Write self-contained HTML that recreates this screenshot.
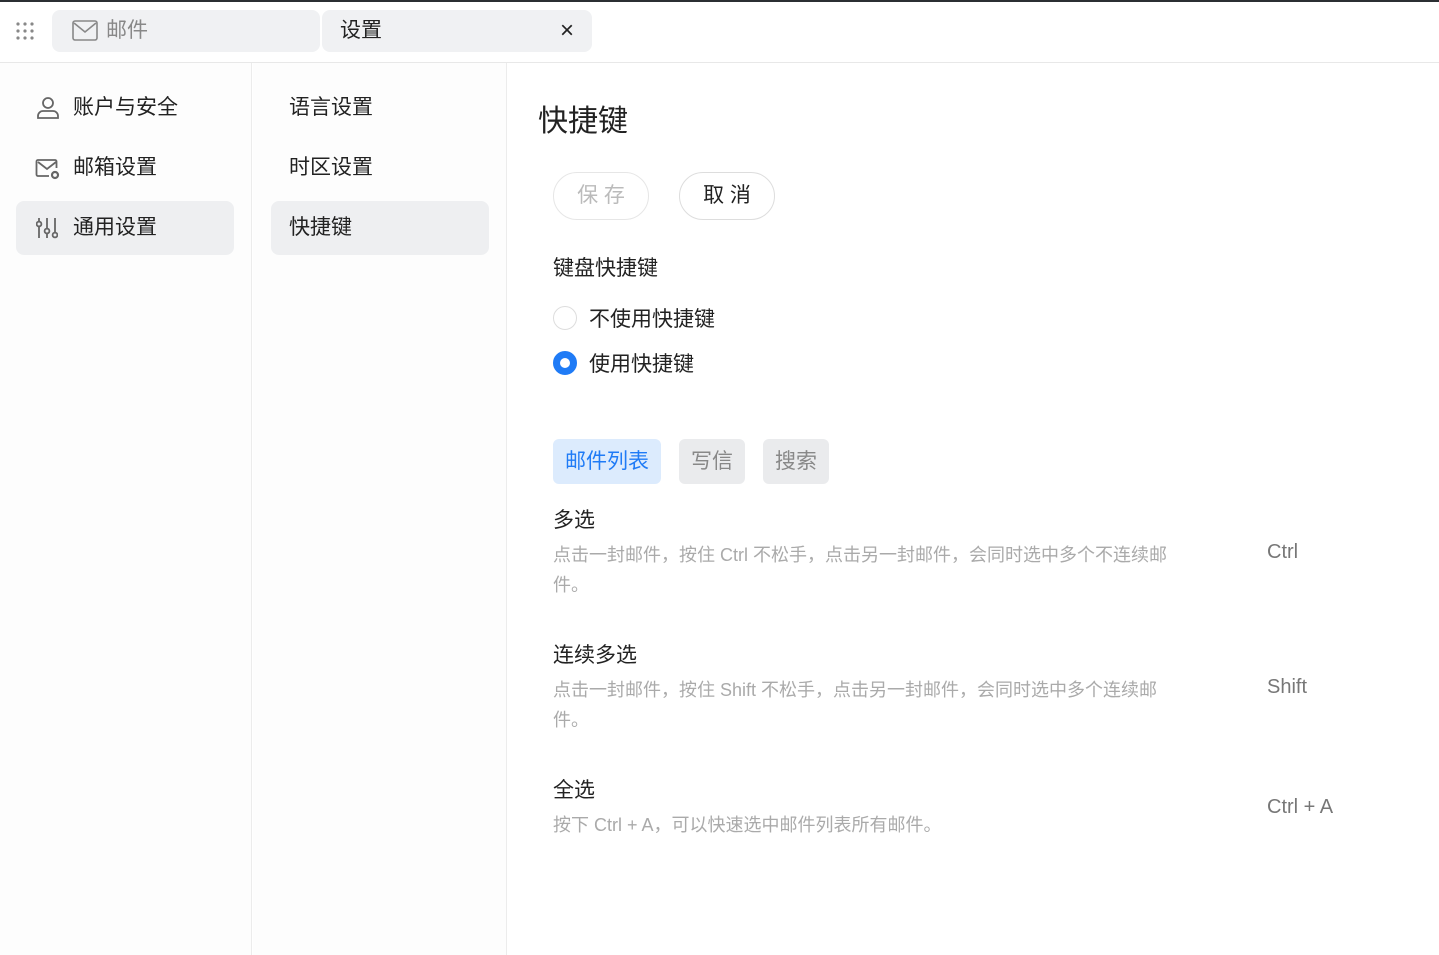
<!DOCTYPE html>
<html><head><meta charset="utf-8"><style>
*{margin:0;padding:0;box-sizing:border-box}
body{width:1439px;height:955px;background:#fff;font-family:"Liberation Sans","Noto Sans CJK SC",sans-serif;color:#222;position:relative;overflow:hidden}
.a{position:absolute}
.top{left:0;top:0;width:1439px;height:2px;background:#2b2f33}
.hdr{left:0;top:62px;width:1439px;height:1px;background:#e8e8e8}
.tab{top:10px;height:42px;background:#f0f1f3;border-radius:8px;font-size:21px;line-height:42px}
.col1{left:0;top:63px;width:252px;height:892px;background:#fdfdfd;border-right:1px solid #ececec}
.col2{left:253px;top:63px;width:254px;height:892px;background:#fdfdfd;border-right:1px solid #ececec}
.item{font-size:21px;line-height:54px;height:54px;border-radius:8px}
.sel{background:#eeeff1}
.btn{height:48px;border:1px solid #ddd;border-radius:24px;font-size:21px;line-height:46px;text-align:center}
.t{font-size:21px}
.g{font-size:18px;color:#aaa;line-height:30px}
.k{font-size:20px;color:#777}
.chip{top:439px;height:45px;border-radius:6px;font-size:21px;line-height:45px;text-align:center;background:#eaebed;color:#888}
</style></head><body>
<div class="a top"></div>
<svg class="a" style="left:15px;top:21px" width="22" height="20"><g fill="#888"><circle cx="3" cy="3" r="1.6"/><circle cx="10" cy="3" r="1.6"/><circle cx="17" cy="3" r="1.6"/><circle cx="3" cy="10" r="1.6"/><circle cx="10" cy="10" r="1.6"/><circle cx="17" cy="10" r="1.6"/><circle cx="3" cy="17" r="1.6"/><circle cx="10" cy="17" r="1.6"/><circle cx="17" cy="17" r="1.6"/></g></svg>
<div class="a tab" style="left:52px;width:268px;color:#888"><svg class="a" style="left:20px;top:10px" width="26" height="22"><rect x="1" y="1" width="24" height="19" rx="2" fill="none" stroke="#888" stroke-width="1.6"/><path d="M2 3l11 9 11-9" fill="none" stroke="#888" stroke-width="1.6"/></svg><span class="a" style="left:54px">邮件</span></div>
<div class="a tab" style="left:322px;width:270px"><span class="a" style="left:18px">设置</span><span class="a" style="left:238px;font-size:24px">×</span></div>
<div class="a hdr"></div>
<div class="a col1"></div><div class="a col2"></div>
<svg class="a" style="left:36px;top:96px" width="24" height="24"><circle cx="12" cy="7" r="5" fill="none" stroke="#666" stroke-width="1.8"/><path d="M2 22v-2a5 5 0 015-5h10a5 5 0 015 5v2z" fill="none" stroke="#666" stroke-width="1.8"/></svg>
<div class="a item" style="left:73px;top:81px">账户与安全</div>
<svg class="a" style="left:35px;top:157px" width="26" height="24"><path d="M14 19H3a1.5 1.5 0 01-1.5-1.5v-13A1.5 1.5 0 013 3h17a1.5 1.5 0 011.5 1.5V11" fill="none" stroke="#666" stroke-width="1.8"/><path d="M3 5l9 7 9-7" fill="none" stroke="#666" stroke-width="1.8"/><circle cx="20" cy="18" r="3" fill="none" stroke="#666" stroke-width="2.2"/></svg>
<div class="a item" style="left:73px;top:141px">邮箱设置</div>
<div class="a item sel" style="left:16px;top:201px;width:218px"></div>
<svg class="a" style="left:36px;top:217px" width="22" height="22"><g fill="none" stroke="#666" stroke-width="1.8"><path d="M3 1v20M11 1v20M19 1v20"/></g><g fill="#eeeff1" stroke="#666" stroke-width="1.8"><circle cx="3" cy="7" r="2.4"/><circle cx="11" cy="14" r="2.4"/><circle cx="19" cy="18" r="2.4"/></g></svg>
<div class="a item" style="left:73px;top:201px">通用设置</div>
<div class="a item" style="left:289px;top:81px">语言设置</div>
<div class="a item" style="left:289px;top:141px">时区设置</div>
<div class="a item sel" style="left:271px;top:201px;width:218px;padding-left:18px">快捷键</div>
<div class="a" style="left:538px;top:96px;font-size:30px">快捷键</div>
<div class="a btn" style="left:553px;top:172px;width:96px;color:#bbb;border-color:#e6e6e6">保 存</div>
<div class="a btn" style="left:679px;top:172px;width:96px">取 消</div>
<div class="a t" style="left:553px;top:252px">键盘快捷键</div>
<div class="a" style="left:553px;top:306px;width:24px;height:24px;border:1px solid #ddd;border-radius:50%"></div>
<div class="a t" style="left:589px;top:303px">不使用快捷键</div>
<div class="a" style="left:553px;top:351px;width:24px;height:24px;border:7px solid #1f7bf6;border-radius:50%;background:#fff"></div>
<div class="a t" style="left:589px;top:348px">使用快捷键</div>
<div class="a chip" style="left:553px;width:108px;background:#dcebfd;color:#1f7bf6">邮件列表</div>
<div class="a chip" style="left:679px;width:66px">写信</div>
<div class="a chip" style="left:763px;width:66px">搜索</div>
<div class="a t" style="left:553px;top:504px">多选</div>
<div class="a g" style="left:553px;top:540px;width:620px">点击一封邮件，按住 Ctrl 不松手，点击另一封邮件，会同时选中多个不连续邮件。</div>
<div class="a k" style="left:1267px;top:541px">Ctrl</div>
<div class="a t" style="left:553px;top:639px">连续多选</div>
<div class="a g" style="left:553px;top:675px;width:610px">点击一封邮件，按住 Shift 不松手，点击另一封邮件，会同时选中多个连续邮件。</div>
<div class="a k" style="left:1267px;top:676px">Shift</div>
<div class="a t" style="left:553px;top:774px">全选</div>
<div class="a g" style="left:553px;top:810px">按下 Ctrl + A，可以快速选中邮件列表所有邮件。</div>
<div class="a k" style="left:1267px;top:796px">Ctrl + A</div>
</body></html>
